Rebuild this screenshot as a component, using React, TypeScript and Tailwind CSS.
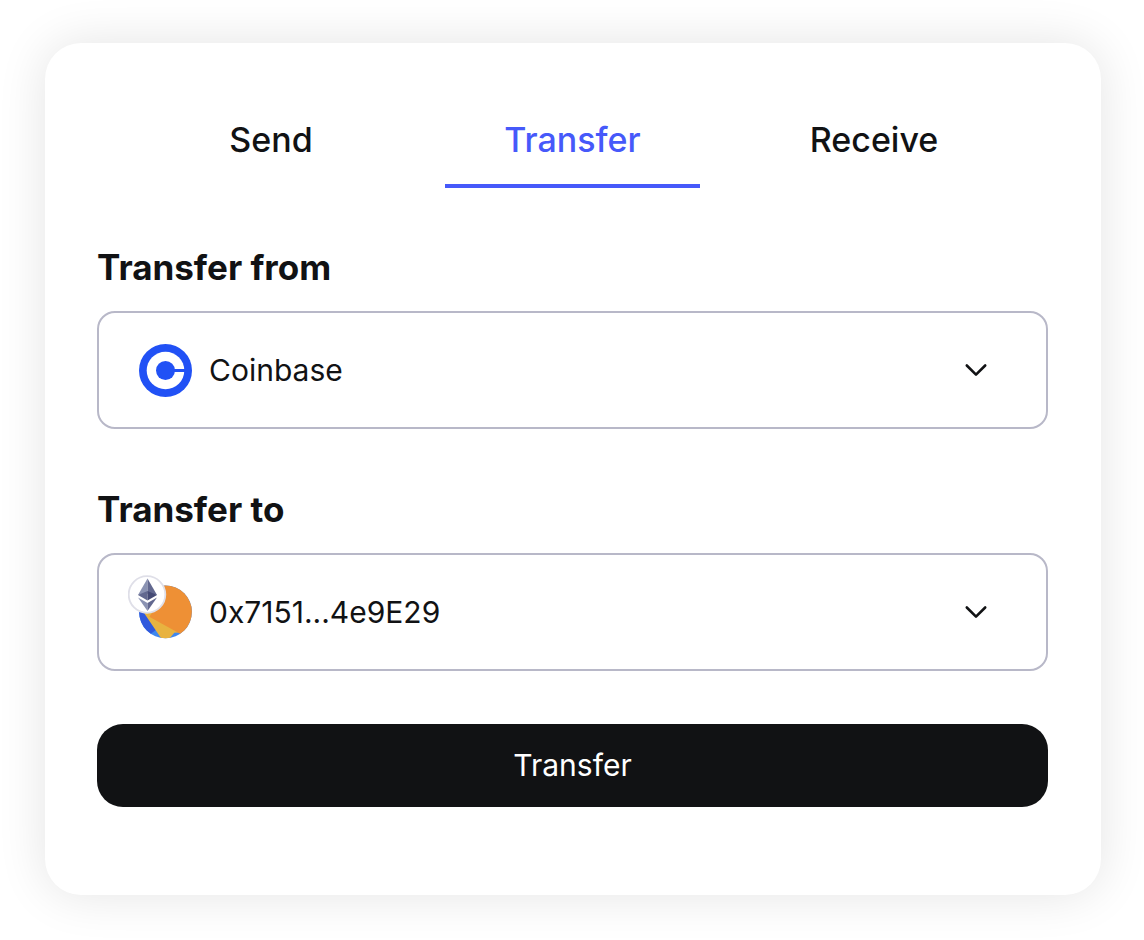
import { useState } from "react";
import type { ReactNode } from "react";

const tabs = ["Send", "Transfer", "Receive"];

function CoinbaseIcon() {
  return (
    <svg className="h-[53px] w-[53px]" viewBox="0 0 53 53" aria-hidden="true">
      <circle cx="26.5" cy="26.5" r="26.5" fill="#2151f5" />
      <circle cx="26.5" cy="26.5" r="18.8" fill="#fff" />
      <circle cx="26.5" cy="26.5" r="9.5" fill="#2151f5" />
      <path d="M34 25h13v3H34z" fill="#2151f5" />
    </svg>
  );
}

function WalletIcon() {
  return (
    <svg className="h-[64px] w-[64px]" viewBox="0 0 64 64" aria-hidden="true">
      <defs>
        <clipPath id="wallet-avatar">
          <circle cx="37.5" cy="36.8" r="26.4" />
        </clipPath>
      </defs>
      <g clipPath="url(#wallet-avatar)">
        <path d="M0 0h64v64H0z" fill="#3f87ee" />
        <path d="M8 26h12l8 29-10 7H8z" fill="#3059dc" />
        <path d="M14.7 36L24 30l27 27.500-4.700.2-6 7.300h-6z" fill="#e8b340" />
        <path d="M21.300 41.700L24 38V0h40v65l-13.700-7.300z" fill="#ee9035" />
      </g>
      <circle cx="19" cy="19.500" r="18.300" fill="#fff" stroke="#dfdfe8" strokeWidth="1.800" />
      <path d="M19.500 3.500v15.300L10 20z" fill="#8a92b2" />
      <path d="M19.500 3.500L29 20l-9.500-1.200z" fill="#62688f" />
      <path d="M10 20l9.500-4v9.500z" fill="#62688f" />
      <path d="M29 20l-9.500-4v9.500z" fill="#454a75" />
      <path d="M10 22.500l9.500 5.500v8z" fill="#8a92b2" />
      <path d="M29 22.500L19.500 28v8z" fill="#62688f" />
    </svg>
  );
}

interface AccountSelectProps {
  id: string;
  label: string;
  options: string[];
  icon: ReactNode;
}

function AccountSelect({ id, label, options, icon }: AccountSelectProps) {
  return (
    <div className="flex flex-col gap-6">
      <label htmlFor={id} className="text-[35px] leading-10 font-bold">
        {label}
      </label>
      <div className="relative">
        <select
          id={id}
          className="h-[118px] w-full appearance-none rounded-[18px] border-2 border-[#b8b8c8] bg-white pr-24 pl-[110px] text-[30px]"
        >
          {options.map((option) => (
            <option key={option}>{option}</option>
          ))}
        </select>
        {icon}
        <svg
          className="pointer-events-none absolute inset-y-0 right-[60px] my-auto h-6 w-6"
          viewBox="0 0 24 24"
          fill="none"
          stroke="#111214"
          strokeWidth="2.600"
          strokeLinecap="round"
          strokeLinejoin="round"
          aria-hidden="true"
        >
          <path d="M2.800 7.500l9.200 9.200 9.200-9.200" />
        </svg>
      </div>
    </div>
  );
}

export default function App() {
  const [active, setActive] = useState("Transfer");

  return (
    <main className="min-h-screen bg-white py-[43px] pr-[43px] pl-[45px] font-['Inter',sans-serif] text-[#111214]">
      <div className="rounded-[36px] bg-white pt-[77px] pr-[53px] pb-[88px] pl-[52px] shadow-[0_0_50px_rgba(0,0,0,0.11)]">
        <nav className="flex justify-evenly">
          {tabs.map((tab) => (
            <button
              key={tab}
              type="button"
              onClick={() => setActive(tab)}
              className={
                tab === active
                  ? "w-[255px] border-b-4 border-[#4659fa] pb-6 text-[34px] leading-10 font-medium text-[#4659fa]"
                  : "w-[255px] border-b-4 border-transparent pb-6 text-[34px] leading-10 font-medium"
              }
            >
              {tab}
            </button>
          ))}
        </nav>
        <form className="mt-[59px] flex flex-col" onSubmit={(e) => e.preventDefault()}>
          <div className="flex flex-col gap-[60px]">
            <AccountSelect
              id="from"
              label="Transfer from"
              options={["Coinbase"]}
              icon={
                <span className="pointer-events-none absolute top-[33px] left-[42px]">
                  <CoinbaseIcon />
                </span>
              }
            />
            <AccountSelect
              id="to"
              label="Transfer to"
              options={["0x7151...4e9E29"]}
              icon={
                <span className="pointer-events-none absolute top-[22px] left-[31px]">
                  <WalletIcon />
                </span>
              }
            />
          </div>
          <button type="submit" className="mt-[53px] h-[83px] rounded-[26px] bg-[#111214] text-[30px] text-white">
            Transfer
          </button>
        </form>
      </div>
    </main>
  );
}
